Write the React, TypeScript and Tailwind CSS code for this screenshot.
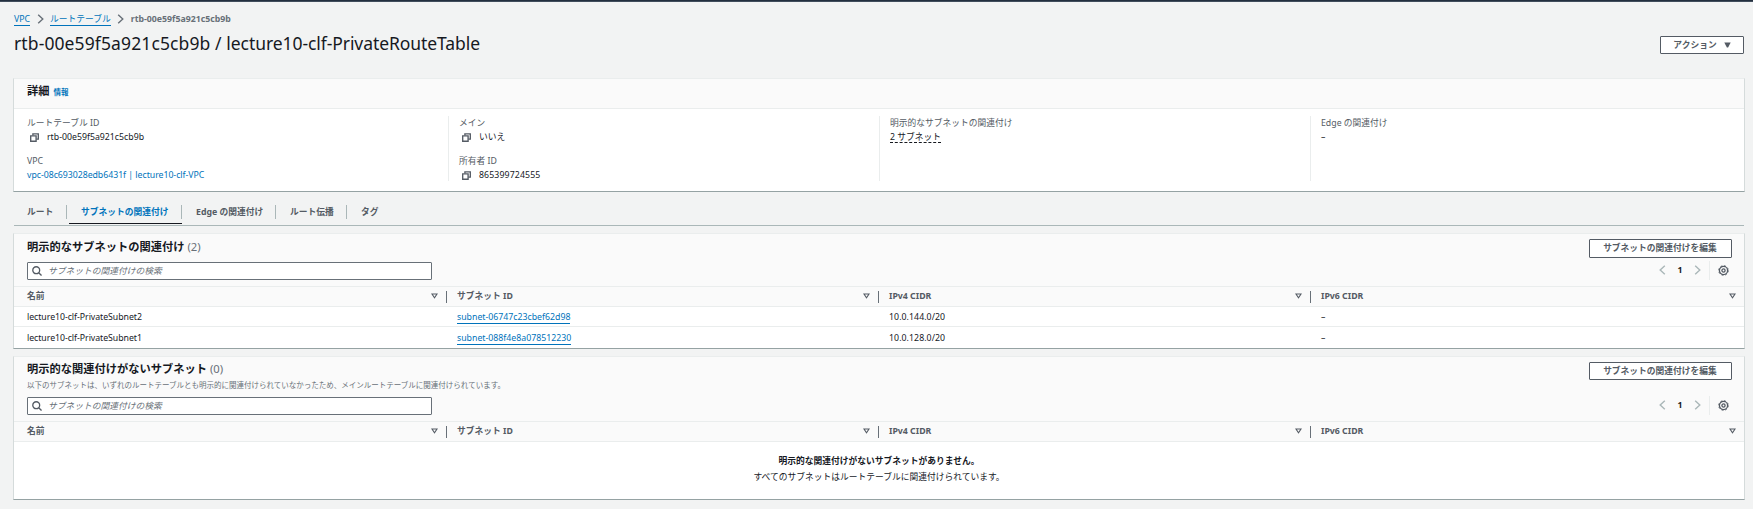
import type { ReactNode } from 'react';

function CopyIcon() {
  return (
    <svg width="9" height="9" viewBox="0 0 9 9" fill="none" stroke="#545b64" strokeWidth="1.35" className="shrink-0">
      <path d="M0.7 2.8h5.4v5.4h-5.4z" />
      <path d="M2.9 2.6V0.8h5.4v5.3H6.3" />
    </svg>
  );
}

function Chevron({ color, left = false, className = '' }: { color: string; left?: boolean; className?: string }) {
  return (
    <svg width="7" height="10" viewBox="0 0 7 10" fill="none" stroke={color} strokeWidth="1.4" className={className}>
      <path d={left ? 'M5.8 0.7L1.2 5l4.6 4.3' : 'M1.2 0.7L5.8 5L1.2 9.3'} />
    </svg>
  );
}

function Gear() {
  return (
    <svg width="11" height="11" viewBox="0 0 11 11" fill="none" stroke="#545b64">
      <circle cx="5.5" cy="5.5" r="4.1" strokeWidth="1.3" />
      <circle cx="5.5" cy="5.5" r="4.8" strokeWidth="0.9" strokeDasharray="1.9 1.87" />
      <circle cx="5.5" cy="5.5" r="1.6" strokeWidth="1.3" />
    </svg>
  );
}

function Copyable({ children, className = '' }: { children: ReactNode; className?: string }) {
  return (
    <div className={`flex h-[14px] items-center gap-[8px] pl-[3px] text-[#16191f] ${className}`}>
      <CopyIcon />
      {children}
    </div>
  );
}

function Field({ label, children }: { label: ReactNode; children: ReactNode }) {
  return (
    <div className="h-[38px]">
      <div className="h-[14px] text-[#545b64]">{label}</div>
      {children}
    </div>
  );
}

function Button({ children, className }: { children: ReactNode; className: string }) {
  return (
    <button className={`flex items-center justify-center rounded-[1px] border border-[#545b64] bg-white font-bold text-[#545b64] ${className}`}>
      {children}
    </button>
  );
}

function Search() {
  return (
    <div className="flex h-[18px] w-[405px] items-center rounded-[1px] border border-[#687078] bg-white pl-[4px]">
      <svg width="10" height="10" viewBox="0 0 9 9" fill="none" stroke="#545b64" strokeWidth="1.2">
        <circle cx="3.8" cy="3.8" r="3.1" />
        <path d="M6 6l2.6 2.6" />
      </svg>
      <span className="ml-[6px] italic text-[#687078]">サブネットの関連付けの検索</span>
    </div>
  );
}

function Pager() {
  return (
    <div className="flex h-[18px] items-center">
      <Chevron color="#aab7b8" left />
      <span className="w-[28px] text-center font-bold text-[#16191f]">1</span>
      <Chevron color="#aab7b8" />
      <span className="ml-[8px] mr-[8px] h-[19px] w-px bg-[#eaeded]" />
      <Gear />
    </div>
  );
}

function Head({ children, className, last = false }: { children: ReactNode; className: string; last?: boolean }) {
  return (
    <div className={`flex items-center justify-between ${className}`}>
      <span className="pb-[2px]">{children}</span>
      <span className="flex items-center">
        <svg width="7" height="6" viewBox="0 0 7 6" fill="none" stroke="#545b64" strokeWidth="1.1" className="mb-px">
          <path d="M1 1h5L3.5 4.7z" />
        </svg>
        {!last && <span className="ml-[8px] h-[12px] w-px bg-[#687078]" />}
      </span>
    </div>
  );
}

function HeadRow() {
  return (
    <div className="flex h-[21px] border-y border-[#eaeded] bg-[#fafafa] pl-[13px] font-bold text-[#545b64]">
      <Head className="w-[420px]">名前</Head>
      <Head className="w-[432px] pl-[10px]">サブネット ID</Head>
      <Head className="w-[432px] pl-[10px]">IPv4 CIDR</Head>
      <Head className="w-[425px] pl-[10px]" last>IPv6 CIDR</Head>
    </div>
  );
}

const subnets = [
  { name: 'lecture10-clf-PrivateSubnet2', id: 'subnet-06747c23cbef62d98', cidr: '10.0.144.0/20' },
  { name: 'lecture10-clf-PrivateSubnet1', id: 'subnet-088f4e8a078512230', cidr: '10.0.128.0/20' },
];

const panel = 'flex flex-col border border-[#eaeded] border-x-[#d5dbdb] border-b-[#95a2a3] bg-white';

export default function App() {
  return (
    <div className="h-[509px] w-[1753px] overflow-hidden bg-[#f2f3f3] font-['Noto_Sans','Noto_Sans_CJK_JP',sans-serif] text-[8.75px] leading-[14px] text-[#16191f]">
      <div className="h-[2px] border-b border-[#414d5c] bg-[#232f3e]" />
      <div className="flex h-[76px] justify-between pl-[14px] pr-[9px]">
        <div>
          <nav className="mt-[10px] flex h-[14px] items-center">
            <a className="h-[13px] border-b border-[#0073bb] leading-[13px] text-[#0073bb]">VPC</a>
            <Chevron color="#687078" className="ml-[7px] mr-[6px]" />
            <a className="h-[13px] border-b border-[#0073bb] leading-[13px] text-[#0073bb]">ルートテーブル</a>
            <Chevron color="#687078" className="mx-[6.5px]" />
            <span className="font-bold text-[#687078]">rtb-00e59f5a921c5cb9b</span>
          </nav>
          <h1 className="mt-[6px] text-[17.5px] leading-[22px]">
            <span className="tracking-[0.11px]">rtb-00e59f5a921c5cb9b / </span>
            <span className="tracking-[-0.07px]">lecture10-clf-PrivateRouteTable</span>
          </h1>
        </div>
        <Button className="mt-[34px] h-[18px] w-[84px] gap-[7px]">
          アクション
          <svg width="7" height="6" viewBox="0 0 7 6" fill="#545b64"><path d="M0.3 0.4h6.4L4.1 5.6h-1.2z" /></svg>
        </Button>
      </div>

      <main className="ml-[13px] w-[1732px]">
        <section className={`h-[114px] ${panel}`}>
          <div className="flex h-[30px] shrink-0 items-center border-b border-[#eaeded] bg-[#fafafa] pb-[5px] pl-[13px]">
            <h2 className="text-[11.25px] font-bold">詳細</h2>
            <a className="ml-[4px] mt-[2px] text-[7.5px] font-bold text-[#0073bb]">情報</a>
          </div>
          <div className="mt-[7px] flex h-[65px] pl-[13px]">
            <div className="w-[421px]">
              <Field label="ルートテーブル ID"><Copyable>rtb-00e59f5a921c5cb9b</Copyable></Field>
              <Field label="VPC"><a className="block tracking-[-0.035px] text-[#0073bb]">vpc-08c693028edb6431f | lecture10-clf-VPC</a></Field>
            </div>
            <div className="w-[431px] border-l border-[#eaeded] pl-[10px]">
              <Field label="メイン"><Copyable>いいえ</Copyable></Field>
              <Field label="所有者 ID"><Copyable className="tracking-[0.11px]">865399724555</Copyable></Field>
            </div>
            <div className="w-[431px] border-l border-[#eaeded] pl-[10px]">
              <Field label="明示的なサブネットの関連付け">
                <span className="inline-block h-[13px] border-b border-dashed border-[#16191f]">2 サブネット</span>
              </Field>
            </div>
            <div className="border-l border-[#eaeded] pl-[10px]">
              <Field label="Edge の関連付け">–</Field>
            </div>
          </div>
        </section>

        <div className="ml-px mt-[12px] flex h-[22px] w-[1730px] border-b border-[#aab7b8] font-bold text-[#545b64]">
          <div className="flex w-[53px] items-start"><span className="w-[52px] pl-[13px] pt-px">ルート</span><i className="mt-[1px] h-[14px] w-px bg-[#aab7b8]" /></div>
          <div className="ml-[2px] flex h-[20px] w-[113px] items-start border-b border-[#16191f] text-[#0073bb]"><span className="w-[112px] pl-[12px] pt-px">サブネットの関連付け</span><i className="mt-[1px] h-[14px] w-px bg-[#aab7b8]" /></div>
          <div className="flex w-[94px] items-start"><span className="w-[93px] pl-[14px] pt-px">Edge の関連付け</span><i className="mt-[1px] h-[14px] w-px bg-[#aab7b8]" /></div>
          <div className="flex w-[71px] items-start"><span className="w-[70px] pl-[14px] pt-px">ルート伝播</span><i className="mt-[1px] h-[14px] w-px bg-[#aab7b8]" /></div>
          <span className="pl-[14px] pt-px">タグ</span>
        </div>

        <section className={`mt-[7px] h-[116px] ${panel}`}>
          <div className="flex h-[52px] shrink-0 justify-between bg-[#fafafa] pl-[13px] pr-[12px]">
            <div>
              <h2 className="mt-[5px] h-[23px] text-[11.25px] font-bold leading-[15px]">明示的なサブネットの関連付け <span className="font-normal text-[#687078]">(2)</span></h2>
              <Search />
            </div>
            <div className="flex flex-col items-end">
              <Button className="mt-[5px] h-[19px] w-[143px] pb-px pr-px">サブネットの関連付けを編集</Button>
              <div className="mr-[3px] mt-[3px]"><Pager /></div>
            </div>
          </div>
          <HeadRow />
          {subnets.map((s, i) => (
            <div key={s.id} className={`flex pl-[13px] ${i === 0 ? 'h-[20px] items-center border-b border-[#eaeded]' : 'h-[21px] items-center pb-px pt-[2px]'}`}>
              <span className="w-[430px] tracking-[-0.045px]">{s.name}</span>
              <span className="w-[432px]"><a className="inline-block h-[13px] border-b border-[#0073bb] leading-[13px] text-[#0073bb]">{s.id}</a></span>
              <span className="w-[432px] tracking-[0.06px]">{s.cidr}</span>
              <span>–</span>
            </div>
          ))}
        </section>

        <section className={`mt-[7px] h-[144px] ${panel}`}>
          <div className="flex h-[64px] shrink-0 justify-between bg-[#fafafa] pl-[13px] pr-[12px]">
            <div>
              <h2 className="mt-[4px] h-[18px] text-[11.25px] font-bold leading-[15px]">明示的な関連付けがないサブネット <span className="font-normal text-[#687078]">(0)</span></h2>
              <p className="h-[18px] text-[7.5px] leading-[12px] text-[#687078]">以下のサブネットは、いずれのルートテーブルとも明示的に関連付けられていなかったため、メインルートテーブルに関連付けられています。</p>
              <Search />
            </div>
            <div className="flex flex-col items-end">
              <Button className="mt-[5px] h-[18px] w-[143px] pb-px pr-px">サブネットの関連付けを編集</Button>
              <div className="mr-[3px] mt-[16px]"><Pager /></div>
            </div>
          </div>
          <HeadRow />
          <div className="flex flex-col items-center gap-[2px] pt-[12px] text-center">
            <b>明示的な関連付けがないサブネットがありません。</b>
            <span className="text-[#16191f]">すべてのサブネットはルートテーブルに関連付けられています。</span>
          </div>
        </section>
      </main>
    </div>
  );
}
